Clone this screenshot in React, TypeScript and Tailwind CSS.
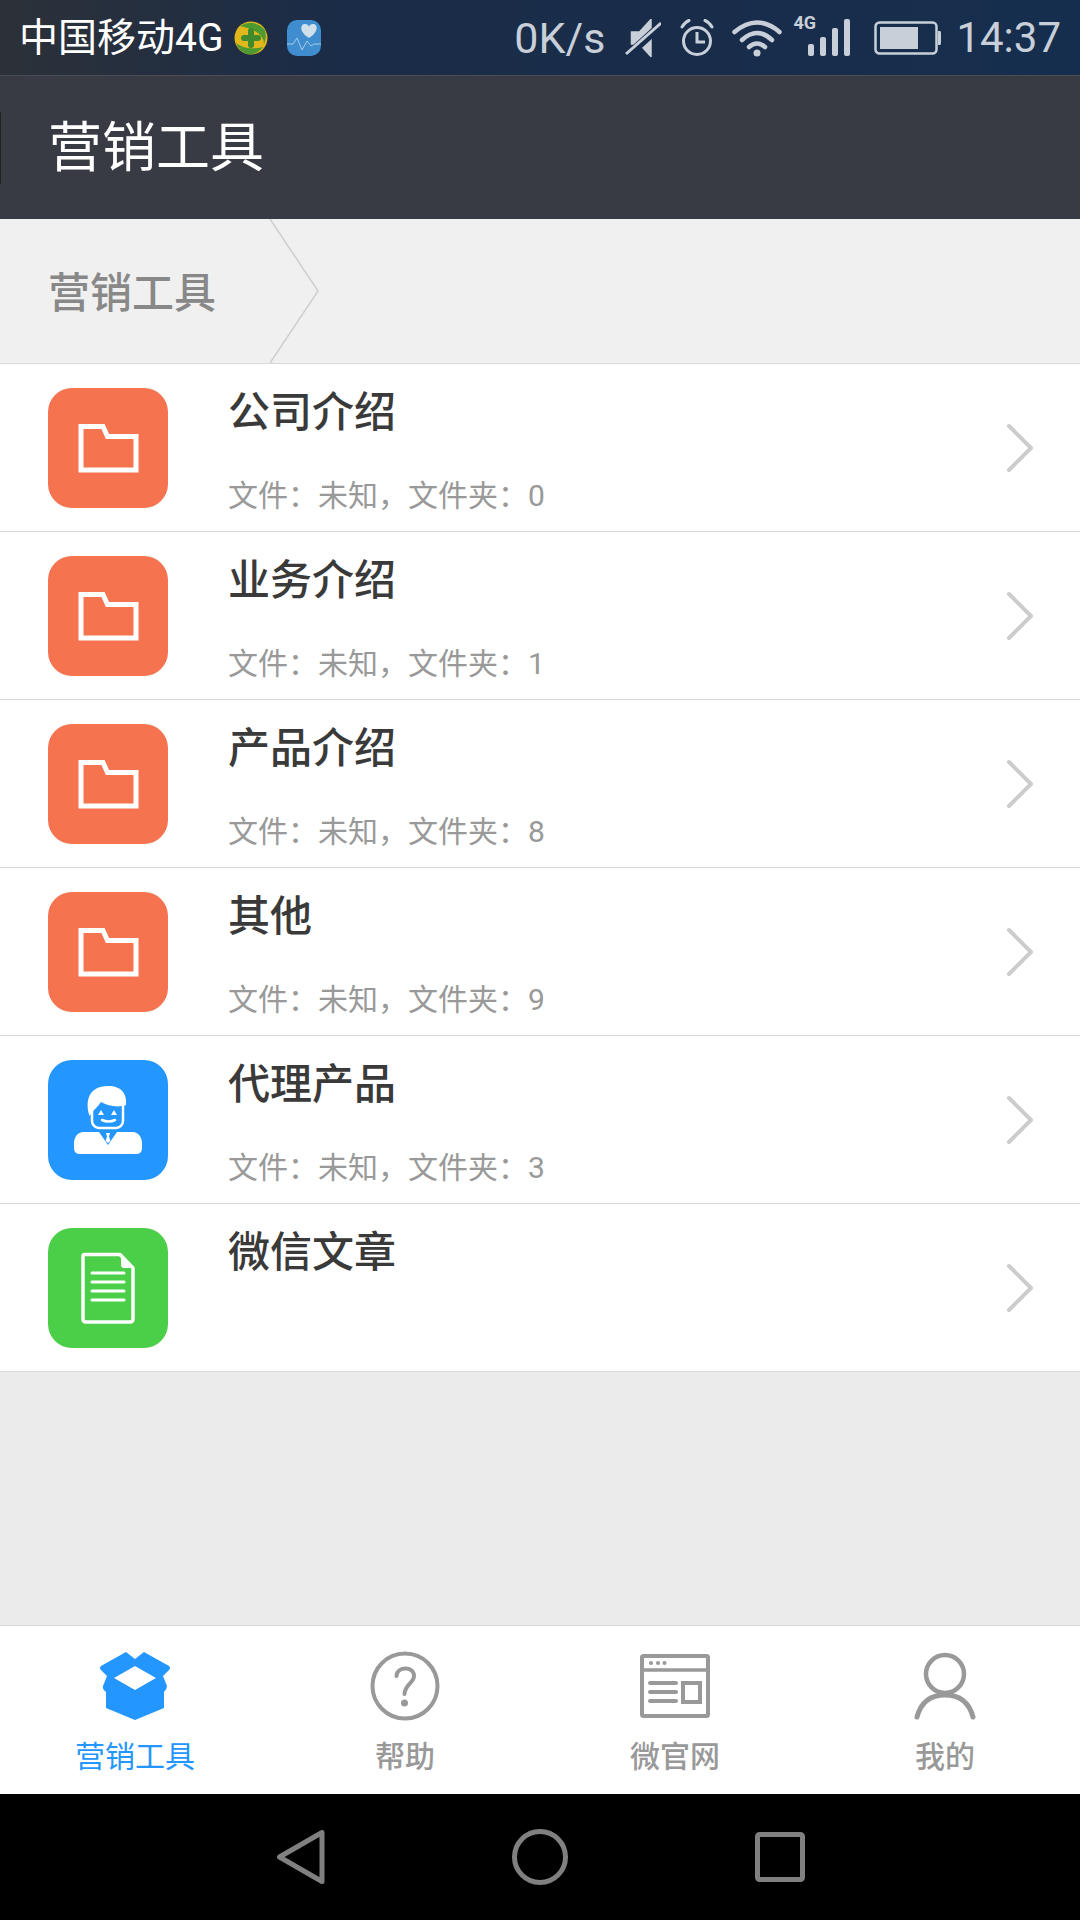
import React from "react";

const FONT = "[font-family:Roboto,'Noto_Sans_CJK_SC',sans-serif]";

type Row = {
  title: string;
  sub?: string;
  tile: "folder" | "person" | "doc";
};

const ROWS: Row[] = [
  { title: "公司介绍", sub: "文件：未知，文件夹：0", tile: "folder" },
  { title: "业务介绍", sub: "文件：未知，文件夹：1", tile: "folder" },
  { title: "产品介绍", sub: "文件：未知，文件夹：8", tile: "folder" },
  { title: "其他", sub: "文件：未知，文件夹：9", tile: "folder" },
  { title: "代理产品", sub: "文件：未知，文件夹：3", tile: "person" },
  { title: "微信文章", tile: "doc" },
];

function FolderTile() {
  return (
    <div className="w-[120px] h-[120px] shrink-0 rounded-[24px] bg-[#f5734f]">
      <svg width="120" height="120" viewBox="0 0 120 120" fill="none">
        <path d="M33 38.500H55L59.500 48.500H88V82H33Z" stroke="#fff" strokeWidth="5" />
      </svg>
    </div>
  );
}

function PersonTile() {
  return (
    <div className="w-[120px] h-[120px] shrink-0 rounded-[24px] bg-[#2396ff]">
      <svg width="120" height="120" viewBox="0 0 120 120" fill="none">
        <rect x="44" y="37" width="31" height="31" rx="7" stroke="#fff" strokeWidth="2.500" />
        <path d="M41.500 56C37 42 40 26 60 26C74 26 79 34 78 45C70 48 60 46 53 42C50 47 45 50 41.500 56Z" fill="#fff" />
        <path d="M50 55L53 50L56 55ZM63 55L66 50L69 55Z" fill="#fff" />
        <path d="M54 60Q60.500 63 67 60" stroke="#fff" strokeWidth="2.500" strokeLinecap="round" />
        <path d="M34 72H51L60 85L69 72H86Q94 74 94 84V88Q94 94 88 94H32Q26 94 26 88V84Q26 74 34 72Z" fill="#fff" />
        <path d="M58 73H62L61 76.500L62.500 81L60 83L57.500 81L59 76.500Z" fill="#fff" />
      </svg>
    </div>
  );
}

function DocTile() {
  return (
    <div className="w-[120px] h-[120px] shrink-0 rounded-[24px] bg-[#4bcf48]">
      <svg width="120" height="120" viewBox="0 0 120 120" fill="none">
        <path d="M37 26.500H72L85 40V91Q85 94 82 94H38Q35 94 35 91V28Q35 26.500 37 26.500Z" stroke="#fff" strokeWidth="3.500" strokeLinejoin="round" />
        <path d="M74 30V37Q74 39 76 39H82" fill="#fff" stroke="#fff" strokeWidth="2" />
        <path d="M44 45H76M44 54H76M44 63H76M44 72H76" stroke="#fff" strokeWidth="3" strokeLinecap="round" />
      </svg>
    </div>
  );
}

function ListRow({ row }: { row: Row }) {
  return (
    <div className="relative h-[168px] flex items-center pl-[48px] pr-[46px] bg-white border-b border-[#d8d8d8]">
      {row.tile === "folder" && <FolderTile />}
      {row.tile === "person" && <PersonTile />}
      {row.tile === "doc" && <DocTile />}
      <div className="ml-[60px] self-start flex-1 pt-[21px]">
        <div className="text-[42px] leading-[56px] font-medium text-[#3a3a3a]">{row.title}</div>
        {row.sub && <div className="mt-[35px] text-[30px] leading-[40px] text-[#999999]">{row.sub}</div>}
      </div>
      <svg width="28" height="50" viewBox="0 0 28 50" fill="none">
        <path d="M3 3L25 25L3 47" stroke="#cccccc" strokeWidth="4" strokeLinecap="round" strokeLinejoin="round" />
      </svg>
    </div>
  );
}

function StatusBar() {
  const c = "#c8cfd8";
  return (
    <div className="h-[76px] shrink-0 flex items-center pl-[19px] pr-[19px] border-b border-[#4a4d55] bg-[linear-gradient(90deg,#2c3138_0%,#1b2c47_30%,#162e4e_100%)]">
      <span className="text-[39px] leading-[50px] text-white">中国移动4G</span>
      {/* 360 guard */}
      <svg className="ml-[11px]" width="34" height="34" viewBox="0 0 34 34">
        <circle cx="17" cy="17" r="16.500" fill="#e0b81c" />
        <path d="M6 5Q20 -3 31 9Q33 17 30 23Q30 10 6 5ZM2 22Q12 30 29 26Q22 35 12 33Q5 30 2 22Z" fill="#4f9a30" />
        <path d="M17 10V24M10 17H24" stroke="#3f8a2c" strokeWidth="6" strokeLinecap="round" />
      </svg>
      <svg className="ml-[19px]" width="34" height="36" viewBox="0 0 34 36">
        <rect width="34" height="36" rx="10" fill="#3f8ccf" />
        <path d="M22 18C12 12 13 4 18 4C20 4 22 5 22 7C22 5 24 4 26 4C31 4 32 12 22 18Z" fill="#cfe0ea" />
        <path d="M0 24H6L10 18L15 30L20 21L24 26L27 24H34" fill="none" stroke="#a3cbe8" strokeWidth="1" />
      </svg>
      <div className="ml-auto flex items-center text-[#c8cfd8]">
        <span className="text-[43px] leading-[50px] font-normal">0K/s</span>
        {/* mute */}
        <svg className="ml-[20px]" width="36" height="38" viewBox="0 0 36 38" fill="none">
          <path d="M7.500 14H15L25 3V35L15 24H7.500Z" stroke={c} strokeWidth="3.500" fill={c} />
          <path d="M1 38L36 6" stroke="#172c4a" strokeWidth="8" />
          <path d="M1 35L36 4" stroke={c} strokeWidth="3" />
        </svg>
        {/* alarm */}
        <svg className="ml-[18px]" width="36" height="38" viewBox="0 0 36 38" fill="none">
          <circle cx="18" cy="22" r="13.500" stroke={c} strokeWidth="3" />
          <path d="M18 13V23H26" stroke={c} strokeWidth="3" />
          <path d="M3 8Q6 3 10 1.500M33 8Q30 3 26 1.500" stroke={c} strokeWidth="3" strokeLinecap="round" />
        </svg>
        {/* wifi */}
        <svg className="ml-[17px]" width="50" height="38" viewBox="0 0 50 38" fill="none">
          <path d="M2.500 13Q25 -6 47.500 13M10 21Q25 7 40 21M17 28Q25 21 33 28" stroke={c} strokeWidth="4.500" strokeLinecap="round" />
          <circle cx="25" cy="34" r="3.500" fill={c} />
        </svg>
        {/* signal */}
        <div className="relative ml-[11px] w-[57px] h-[44px]">
          <span className="absolute left-0 top-[-3px] text-[18px] leading-[20px] font-bold">4G</span>
          <div className="absolute right-0 bottom-[4px] flex items-end gap-[6px]">
            <div className="w-[6px] h-[12px] rounded-[2px] bg-[#c8cfd8]" />
            <div className="w-[6px] h-[19px] rounded-[2px] bg-[#c8cfd8]" />
            <div className="w-[6px] h-[28px] rounded-[2px] bg-[#c8cfd8]" />
            <div className="w-[6px] h-[37px] rounded-[2px] bg-[#c8cfd8]" />
          </div>
        </div>
        {/* battery */}
        <svg className="ml-[24px]" width="68" height="34" viewBox="0 0 68 34" fill="none">
          <rect x="1.500" y="1.500" width="61" height="31" rx="4" stroke={c} strokeWidth="2.500" />
          <rect x="6" y="6" width="38" height="22" fill={c} />
          <path d="M64 10H66Q67 10 67 12V22Q67 24 66 24H64Z" fill={c} />
        </svg>
        <span className="ml-[14px] text-[42px] leading-[50px] font-normal">14:37</span>
      </div>
    </div>
  );
}

function Tab({ label, active, children }: { label: string; active?: boolean; children: React.ReactNode }) {
  return (
    <div className="flex flex-col items-center">
      <div className="h-[70px] mt-[25px] flex items-center justify-center">{children}</div>
      <div className={`mt-[16px] text-[30px] leading-[40px] ${active ? "text-[#2396ff]" : "text-[#999999] font-medium"}`}>{label}</div>
    </div>
  );
}

export default function App() {
  return (
    <div className={`w-[1080px] h-[1920px] flex flex-col bg-[#ebebeb] ${FONT}`}>
      <StatusBar />

      <header className="relative h-[143px] shrink-0 flex items-center pl-[48px] pt-[2px] bg-[#383b44]">
        <div className="absolute left-0 top-[36px] w-[1px] h-[72px] bg-[#222222]" />
        <h1 className="text-[54px] leading-[70px] text-white">营销工具</h1>
      </header>

      {/* breadcrumb */}
      <div className="relative h-[145px] shrink-0 flex items-center pl-[48px] pt-[6px] bg-[#f0f0f0] border-b border-[#d8d8d8]">
        <span className="text-[42px] leading-[56px] font-medium text-[#888888]">营销工具</span>
        <svg className="absolute left-[268px] top-0" width="52" height="144" viewBox="0 0 52 144" fill="none">
          <path d="M2 0L50 72L2 144" stroke="#cfcfcf" strokeWidth="1.500" />
        </svg>
      </div>

      {ROWS.map((row) => (
        <ListRow key={row.title} row={row} />
      ))}

      <div className="flex-1" />

      {/* tabs */}
      <nav className="h-[169px] shrink-0 grid grid-cols-4 bg-white border-t border-[#d8d8d8]">
        <Tab label="营销工具" active>
          <svg width="72" height="70" viewBox="-1 -1 72 70">
            <path
              fillRule="evenodd"
              d="M26 0L35 7L44 0L69 14Q71 16 69 18L63 24L67 34Q67 37 64 40V56L35 68L6 56V40Q2 37 3 34L7 24L1 18Q-1 16 1 14ZM14 26L35 14L56 26L35 38Z"
              fill="#2396ff"
            />
          </svg>
        </Tab>
        <Tab label="帮助">
          <svg width="70" height="70" viewBox="0 0 70 70" fill="none">
            <circle cx="35" cy="35" r="32.500" stroke="#999999" strokeWidth="4" />
            <path d="M26.500 25C27 15 44 15 44 25C44 32 35 33 34.500 43" stroke="#999999" strokeWidth="4" strokeLinecap="round" />
            <circle cx="34.500" cy="52" r="3.500" fill="#999999" />
          </svg>
        </Tab>
        <Tab label="微官网">
          <svg width="70" height="64" viewBox="0 0 70 64" fill="none">
            <rect x="2" y="2" width="66" height="60" rx="1.500" stroke="#999999" strokeWidth="4" />
            <path d="M2 16H68" stroke="#999999" strokeWidth="3.500" />
            <circle cx="11" cy="9" r="2" fill="#999999" />
            <circle cx="18" cy="9" r="2" fill="#999999" />
            <circle cx="24.500" cy="9" r="2" fill="#999999" />
            <path d="M10 29H36M10 38H36M10 47H36" stroke="#999999" strokeWidth="4" strokeLinecap="round" />
            <rect x="43" y="29" width="17" height="19" stroke="#999999" strokeWidth="4" />
          </svg>
        </Tab>
        <Tab label="我的">
          <svg width="64" height="70" viewBox="0 0 64 70" fill="none">
            <circle cx="32" cy="23" r="19" stroke="#999999" strokeWidth="4.500" />
            <path d="M4 66C8 51 18 44 32 44C46 44 56 51 60 66" stroke="#999999" strokeWidth="5" strokeLinecap="round" />
          </svg>
        </Tab>
      </nav>

      {/* android nav */}
      <div className="h-[126px] shrink-0 flex items-center pl-[276px] bg-black">
        <svg width="50" height="56" viewBox="0 0 50 56" fill="none">
          <path d="M46 3.500V52.500L3.500 28Z" stroke="#808080" strokeWidth="5" strokeLinejoin="round" />
        </svg>
        <svg className="ml-[186px]" width="56" height="56" viewBox="0 0 56 56" fill="none">
          <circle cx="28" cy="28" r="25.500" stroke="#808080" strokeWidth="5" />
        </svg>
        <svg className="ml-[187px]" width="50" height="50" viewBox="0 0 50 50" fill="none">
          <rect x="2.500" y="2.500" width="45" height="45" rx="2" stroke="#808080" strokeWidth="5" />
        </svg>
      </div>
    </div>
  );
}
